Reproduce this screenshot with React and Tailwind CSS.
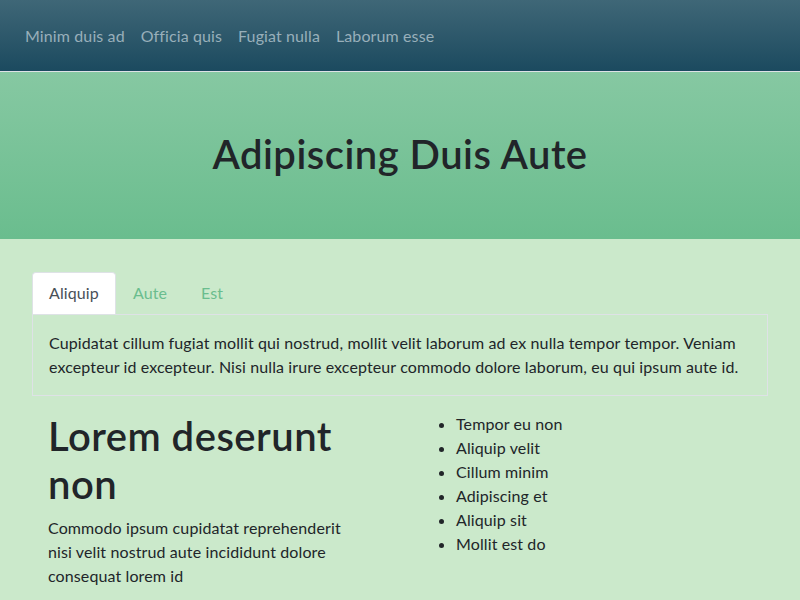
export default function App() {
  const font = { fontFamily: '"Lato", "Noto Sans", sans-serif' };
  return (
    <div className="min-h-[600px] bg-[#cbe9cb] text-[#212529] tracking-[0.007em]" style={font}>
      <nav className="h-[71px] bg-gradient-to-b from-[#3f6777] to-[#1b4a5f] flex items-center px-[17px] border-b border-[#dee2e6] box-content">
        {["Minim duis ad", "Officia quis", "Fugiat nulla", "Laborum esse"].map((t) => (
          <a key={t} className="px-2 text-base leading-6 text-[#98afba]">{t}</a>
        ))}
      </nav>
      <header className="h-[167px] bg-gradient-to-b from-[#86c8a2] to-[#6abd8e] flex items-center justify-center pb-[4px]">
        <h1 className="text-[40px] leading-[48px] font-semibold tracking-[0.012em]">Adipiscing Duis Aute</h1>
      </header>
      <main className="px-8 pt-[33px]">
        <div className="flex">
          <div className="px-4 py-2 leading-6 bg-white text-[#495057] border border-[#dee2e6] border-b-0 rounded-t">Aliquip</div>
          <div className="px-4 py-2 leading-6 text-[#6abd8e] border border-transparent">Aute</div>
          <div className="px-4 py-2 leading-6 text-[#6abd8e] border border-transparent">Est</div>
        </div>
        <div className="border border-[#dee2e6] p-4 leading-6">
          Cupidatat cillum fugiat mollit qui nostrud, mollit velit laborum ad ex nulla tempor tempor. Veniam excepteur id excepteur. Nisi nulla irure excepteur commodo dolore laborum, eu qui ipsum aute id.
        </div>
        <div className="grid grid-cols-2 mt-4">
          <div className="px-4">
            <div className="max-w-[320px]">
              <h2 className="text-[40px] leading-[48px] font-semibold tracking-[0.012em] mb-2">Lorem deserunt non</h2>
              <p className="leading-6">Commodo ipsum cupidatat reprehenderit nisi velit nostrud aute incididunt dolore consequat lorem id</p>
            </div>
          </div>
          <div className="px-4">
            <ul className="list-disc pl-10 leading-6">
              {["Tempor eu non", "Aliquip velit", "Cillum minim", "Adipiscing et", "Aliquip sit", "Mollit est do"].map((t) => (
                <li key={t}>{t}</li>
              ))}
            </ul>
          </div>
        </div>
      </main>
    </div>
  );
}
